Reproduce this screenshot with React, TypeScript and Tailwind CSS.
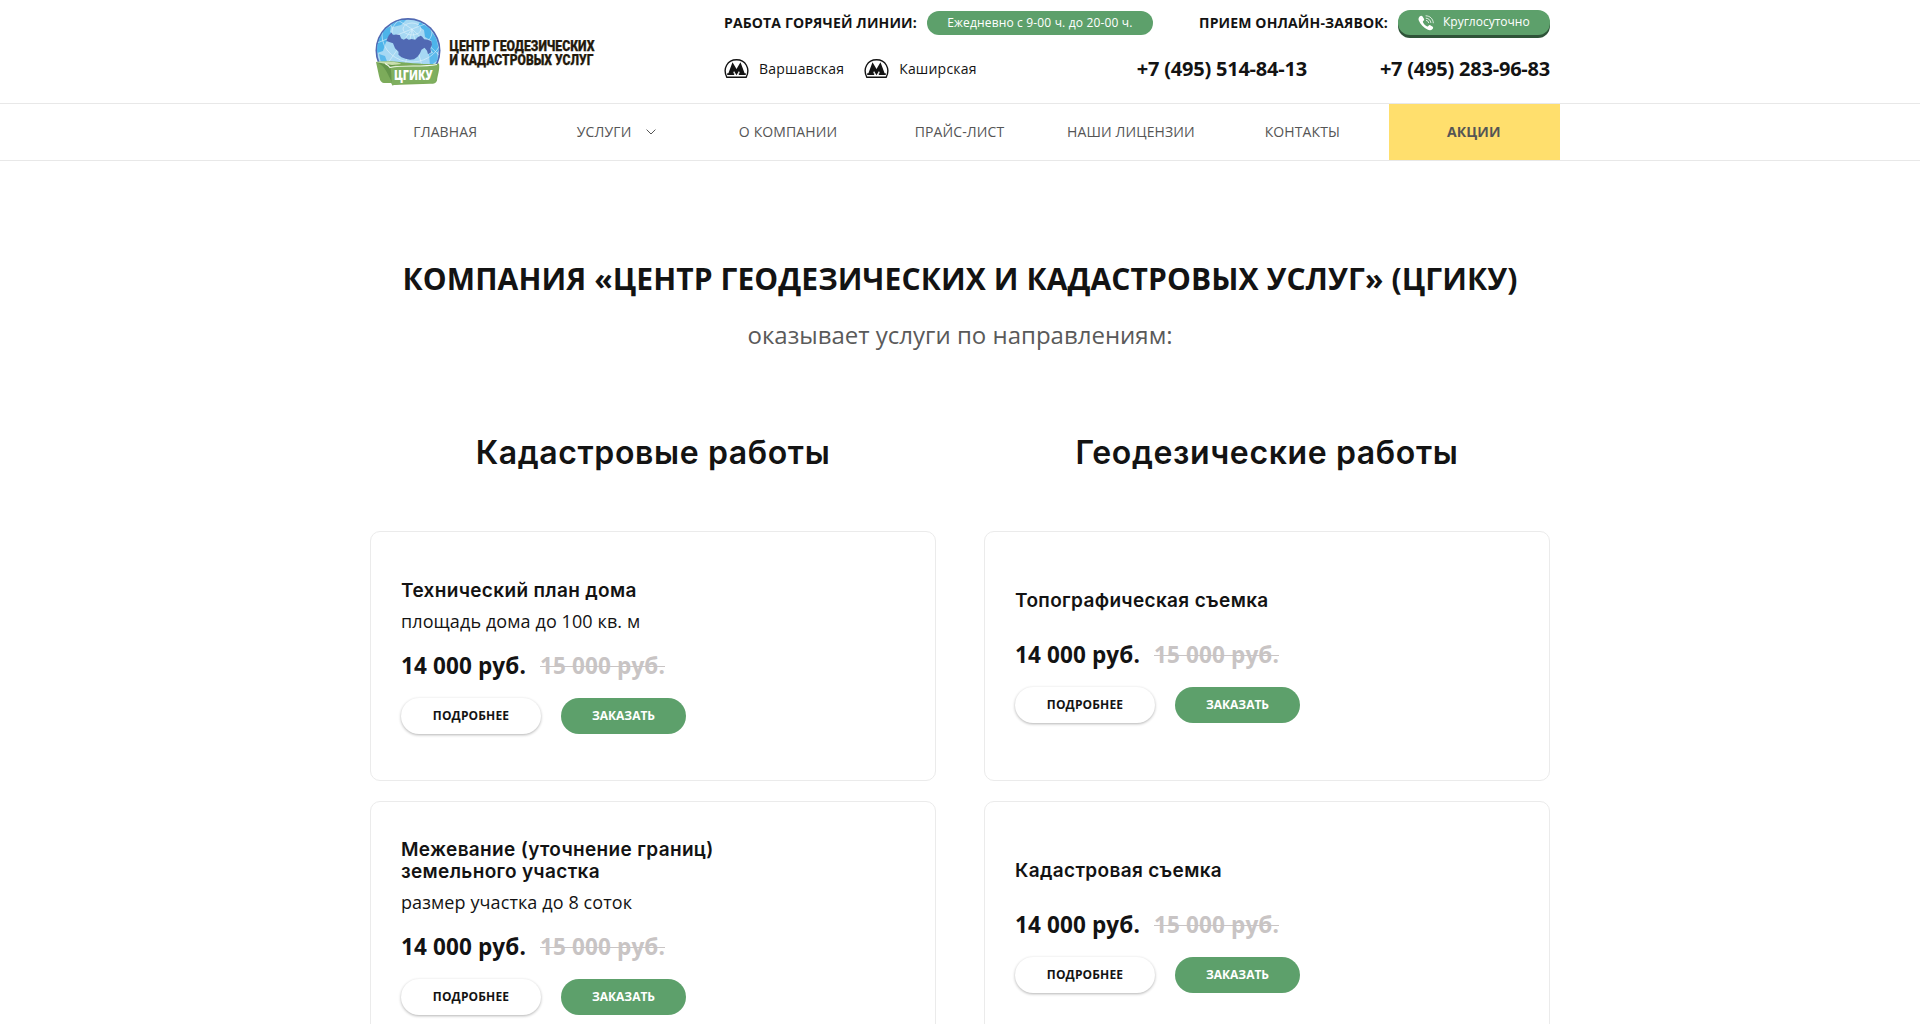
const NAV = ["ГЛАВНАЯ", "УСЛУГИ", "О КОМПАНИИ", "ПРАЙС-ЛИСТ", "НАШИ ЛИЦЕНЗИИ", "КОНТАКТЫ"];

type Service = { title: string[]; note?: string };

const COLUMNS: { heading: string; services: Service[] }[] = [
  {
    heading: "Кадастровые работы",
    services: [
      { title: ["Технический план дома"], note: "площадь дома до 100 кв. м" },
      { title: ["Межевание (уточнение границ)", "земельного участка"], note: "размер участка до 8 соток" },
    ],
  },
  {
    heading: "Геодезические работы",
    services: [{ title: ["Топографическая съемка"] }, { title: ["Кадастровая съемка"] }],
  },
];

function Logo() {
  return (
    <svg className="mt-[17px] ml-[5px] h-[70px] w-[224px] shrink-0 overflow-visible" viewBox="0 0 224 70">
      <defs>
        <clipPath id="globe">
          <circle cx="33" cy="33.500" r="31" />
        </clipPath>
      </defs>
      <circle cx="33" cy="33.500" r="32.500" fill="#5068b2" />
      <circle cx="33" cy="33.500" r="30.800" fill="#a6d8f3" />
      <g clipPath="url(#globe)">
        <path d="M2 26 8 13l8-4-1 6 4 3-8 7-3 9-6 2z" fill="#4db4ea" />
        <path d="M14 6l8-4 9 1-5 5-8 2z" fill="#5bb9ec" />
        <path d="M45 5l9 6 7 10 3 12-4 5-4-5 1-9-7-4-1-7-6-4z" fill="#4db4ea" />
        <path d="M4 37l6 2 3 8-6 3zM54 37l8-2 1 8-8 6z" fill="#5bb9ec" />
        <g fill="none" stroke="#e2f3fc" strokeWidth=".6">
          <ellipse cx="37" cy="12" rx="9" ry="6" />
          <ellipse cx="37" cy="15" rx="20" ry="15" />
          <ellipse cx="37" cy="18" rx="30" ry="27" />
          <path d="M37 12 10 50M37 12 28 60M37 12 50 60M37 12 66 40M37 12 2 26M37 12 18 0M37 12 58 4" />
        </g>
        <path
          d="M11.500 24l1-3 1.500-3 2.500-2.500 1.500 2.500 3-.5 3.700.5 1.500 3.500 2.500 1.200 2.500-1.500 2.500 1.500 3-.7 3.500.7 2.500-2.500 3-1.500 1.500 1 2 2.500 3.500.5 3.800 1.500.5 3.500-1.500 3.500.5 4-3 2-1-3.500-2.500-3-3 2-1.500 3.500-2.500 3.500-3.500 2.500-4 .5-4.500-1-4-1.500-3-2.500 0-3-3.500-3.500-2-5-3-1z"
          fill="#5069b3"
        />
      </g>
      <path d="M1 45c18-3 43 4 63 1.500 1 6-1.500 12-2 17-1 3-4 3.500-7 3.300L18 68l-2-2-7 0c-4-.5-4-4-5-7z" fill="#7cab5a" />
      <path d="M2 45.500c8 3 11 12 15 20l3-18z" fill="#64954a" />
      <path d="M1 45c12-1 23 0 25 2l-9 1c-6-1-11-2-16-3z" fill="#c9dfae" />
      <path d="M15 49.500c16-3 31 1 48-2-1 6-2 12-3 18-14 1-29-1-43 3-1-7 0-13-2-19z" fill="#7faf5f" />
      <path d="M10 46.500c2 1 4 2 5 4 15-3 31 0 47-3" fill="none" stroke="#f3f8ec" strokeWidth="1.200" />
      <text x="19" y="62.500" textLength="38.500" lengthAdjust="spacingAndGlyphs" className="fill-white font-['Open_Sans'] text-[13.5px] font-extrabold">
        ЦГИКУ
      </text>
      <g className="fill-[#241a0c] stroke-[#241a0c] font-['Roboto'] text-[14px] font-black" strokeWidth=".25">
        <text x="74.500" y="33.500" textLength="145" lengthAdjust="spacingAndGlyphs">
          ЦЕНТР ГЕОДЕЗИЧЕСКИХ
        </text>
        <text x="74.500" y="48" textLength="144" lengthAdjust="spacingAndGlyphs">
          И КАДАСТРОВЫХ УСЛУГ
        </text>
      </g>
    </svg>
  );
}

function MetroIcon() {
  return (
    <svg className="h-[19px] w-[25px]" viewBox="0 0 25 19">
      <path d="M2.800 18.200C-1.600 9.500 3.500.8 12.500.8S26.600 9.500 22.200 18.200z" fill="none" stroke="#131313" strokeWidth="1.400" />
      <path
        d="M8.500 3.200 12.500 10 16.500 3.200 20.600 14.200H21.800V15.900H14.800V14.200H15.800L15 11.900 12.500 16.200 10 11.900 9.200 14.200H10.200V15.900H3.200V14.200H4.400z"
        fill="#131313"
      />
    </svg>
  );
}

function PhoneIcon() {
  return (
    <svg className="h-4 w-4" viewBox="0 0 16 16" fill="none">
      <path
        d="M1.900 1.200C3 .3 4 .6 4.600 1.600L5.900 3.700c.5.900.2 1.500-.5 2.100-.6.600-.7 1-.3 1.800 1 1.700 2 2.800 3.700 3.600.8.400 1.200.3 1.700-.4.700-.8 1.300-.9 2.100-.4l1.800 1.200c.9.600 1 1.400.2 2.300-1.200 1.400-2.900 1.700-4.700.9C5.600 13 2.300 9.400.8 5.600.2 3.900.6 2.300 1.900 1.200z"
        fill="#fff"
      />
      <path
        d="M8 .8c4 .1 7 2.900 7.300 7M8.200 3.200c2.500.2 4.400 2 4.700 4.400M8.400 5.500c1.200.2 2 .9 2.200 2.100"
        stroke="#fff"
        strokeWidth=".8"
        strokeLinecap="round"
      />
    </svg>
  );
}

function Card({ service }: { service: Service }) {
  return (
    <article className="flex h-[250px] flex-col items-start justify-center rounded-[10px] border border-[#ebebeb] pl-[30px]">
      <h3
        className={`font-['Inter'] text-[19px] leading-[22px] font-semibold tracking-[0.34px] ${service.note ? "pt-[2px]" : "pt-px mb-[10px]"}`}
      >
        {service.title.map((line) => (
          <span key={line} className="block">
            {line}
          </span>
        ))}
      </h3>
      {service.note && <p className="mt-2 text-[18px] leading-[22px] tracking-[0.1px]">{service.note}</p>}
      <p className={`flex gap-[14px] text-[22.5px] leading-8 font-bold tracking-[0.14px] ${service.note ? "mt-[18px]" : "mt-[17px]"}`}>
        <span>14 000 руб.</span>
        <span className="text-[#c8c4c4] line-through decoration-1">15 000 руб.</span>
      </p>
      <div className="mt-4 flex gap-5 text-[12px] leading-[18px] font-bold">
        <button className="h-9 w-[140px] rounded-full tracking-[0.15px] shadow-[0_1px_3px_rgba(0,0,0,0.3)]">ПОДРОБНЕЕ</button>
        <button className="h-9 w-[125px] rounded-full bg-[#5da06b] text-white">ЗАКАЗАТЬ</button>
      </div>
    </article>
  );
}

export default function App() {
  return (
    <div className="h-screen overflow-hidden bg-white font-['Open_Sans',sans-serif] text-[#131313]">
      <header>
        <div className="mx-auto flex h-[103px] w-[1180px]">
          <Logo />
          <div className="ml-[125px] flex flex-1 flex-col">
            <div className="mt-[10px] flex h-[28px] items-start justify-between">
              <div className="flex gap-[10px]">
                <span className="mt-[3px] text-[14px] leading-5 font-bold tracking-[0.14px]">РАБОТА ГОРЯЧЕЙ ЛИНИИ:</span>
                <span className="mt-px flex h-6 w-[226px] justify-center rounded-full bg-[#5da06b] text-[12px] leading-6 tracking-[0.16px] text-white">
                  Ежедневно с 9-00 ч. до 20-00 ч.
                </span>
              </div>
              <div className="flex gap-[10px]">
                <span className="mt-[3px] text-[14px] leading-5 font-bold tracking-[0.14px]">ПРИЕМ ОНЛАЙН-ЗАЯВОК:</span>
                <button className="flex h-[25px] w-[152px] items-center gap-[9px] rounded-[12px] bg-[#5da06b] pl-5 text-[12px] text-white shadow-[0_3px_0_#2e5338]">
                  <PhoneIcon />
                  <span className="-mt-px">Круглосуточно</span>
                </button>
              </div>
            </div>
            <div className="mt-[20px] flex items-center text-[14px] leading-[21px] tracking-[0.2px]">
              <MetroIcon />
              <span className="ml-[10px]">Варшавская</span>
              <span className="ml-5">
                <MetroIcon />
              </span>
              <span className="ml-[10px]">Каширская</span>
              <div className="ml-auto flex gap-[73px] text-[20px] font-bold tracking-[-0.22px]">
                <span>+7 (495) 514-84-13</span>
                <span>+7 (495) 283-96-83</span>
              </div>
            </div>
          </div>
        </div>
        <nav className="border-y border-[#e8e8e8]">
          <div className="mx-auto grid h-14 w-[1200px] grid-cols-7 items-center text-center text-[14px] tracking-[0.12px] text-[#555]">
            {NAV.map((item) => (
              <a key={item} className="flex items-center justify-center gap-[15px] pr-px pb-[2px]">
                {item}
                {item === "УСЛУГИ" && (
                  <svg className="mt-[2px] h-[6px] w-[10px]" viewBox="0 0 10 6">
                    <path d="M.6.6 5 5 9.400.6" fill="none" stroke="#555" />
                  </svg>
                )}
              </a>
            ))}
            <a className="flex h-full items-center justify-center bg-[#ffdf6d] pr-px pb-[2px] font-bold">АКЦИИ</a>
          </div>
        </nav>
      </header>
      <main className="mx-auto w-[1180px] pt-[97px] text-center">
        <h1 className="text-[30px] leading-[41px] font-bold tracking-[0.1px]">
          КОМПАНИЯ «ЦЕНТР ГЕОДЕЗИЧЕСКИХ И КАДАСТРОВЫХ УСЛУГ» (ЦГИКУ)
        </h1>
        <p className="mt-[19px] text-[24px] leading-[33px] text-[#5a5a5a]">оказывает услуги по направлениям:</p>
        <div className="mt-[83px] grid grid-cols-2 gap-12">
          {COLUMNS.map((column) => (
            <section key={column.heading}>
              <h2 className="mb-[59px] font-['Inter'] text-[32px] leading-[38px] font-semibold tracking-[0.62px]">{column.heading}</h2>
              <div className="grid gap-5 text-left">
                {column.services.map((service) => (
                  <Card key={service.title[0]} service={service} />
                ))}
              </div>
            </section>
          ))}
        </div>
      </main>
    </div>
  );
}
